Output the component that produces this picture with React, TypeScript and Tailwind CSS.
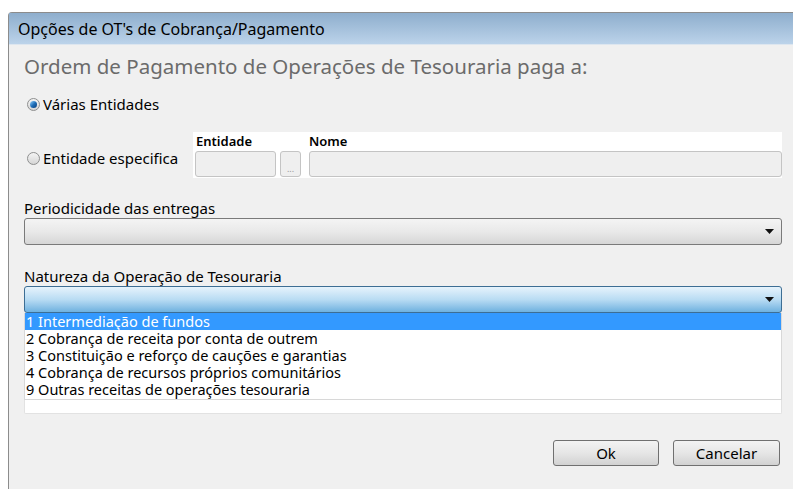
import React from "react";

const font = { fontFamily: '"Noto Sans", "Open Sans", "DejaVu Sans", sans-serif' };

function Arrow() {
  return (
    <svg width="9" height="5" viewBox="0 0 9 5" className="shrink-0">
      <path d="M0 0 H9 L4.5 5 Z" fill="#111" />
    </svg>
  );
}

function Radio({ checked }: { checked?: boolean }) {
  return (
    <span className="relative flex h-[13px] w-[13px] shrink-0 items-center justify-center rounded-full border border-[#8e8f8f] bg-gradient-to-b from-[#f4f4f4] to-[#d6d6d6]">
      {checked && (
        <span className="h-[7px] w-[7px] rounded-full bg-gradient-to-br from-[#8fd3ff] via-[#1f6fb8] to-[#0a3c7a]" />
      )}
    </span>
  );
}

const options = [
  "1 Intermediação de fundos",
  "2 Cobrança de receita por conta de outrem",
  "3 Constituição e reforço de cauções e garantias",
  "4 Cobrança de recursos próprios comunitários",
  "9 Outras receitas de operações tesouraria",
];

export default function App() {
  return (
    <div className="h-[489px] w-[793px] overflow-hidden bg-white pl-[8px] pt-[12px]" style={font}>
      <div className="flex h-full flex-col rounded-tl-[4px] border-l border-t border-[#8c8c8c] bg-[#f0f0f0]">
        {/* title bar */}
        <div className="flex h-[31px] shrink-0 items-center bg-gradient-to-b from-[#8eaecd] to-[#bcd3ea] pl-[9px] text-[16px] text-black">
          Opções de OT's de Cobrança/Pagamento
        </div>
        <div className="h-[1px] bg-[#dde6ef]" />
        <div className="flex flex-1 flex-col pl-[15px] pr-[11px]">
          <div className="mt-[8px] text-[20.5px] leading-[26px] text-[#6b6b6b]">
            Ordem de Pagamento de Operações de Tesouraria paga a:
          </div>

          <div className="mt-[16px] flex items-center gap-[3px] pl-[3px] text-[15px] leading-[18px] text-black">
            <Radio checked />
            <span>Várias Entidades</span>
          </div>

          {/* specific entity */}
          <div className="mt-[19px] flex items-stretch">
            <div className="flex w-[169px] items-center gap-[3px] pl-[3px] pt-[7px] text-[15px] text-black">
              <Radio />
              <span>Entidade especifica</span>
            </div>
            <div className="flex flex-1 flex-col bg-white pl-[2px]">
              <div className="flex h-[19px] items-center text-[13px] font-semibold text-black">
                <span className="w-[114px] pl-[1px]">Entidade</span>
                <span>Nome</span>
              </div>
              <div className="flex h-[27px] items-start gap-[4px]">
                <div className="h-[26px] w-[81px] rounded-[3px] border border-[#c4c4c4] bg-[#efefef]" />
                <div className="flex h-[26px] w-[21px] items-end justify-center rounded-[3px] border border-[#c4c4c4] bg-[#efefef] pb-[2px] text-[9px] leading-[10px] text-[#9a9a9a]">
                  ...
                </div>
                <div className="ml-[4px] h-[26px] flex-1 rounded-[3px] border border-[#c4c4c4] bg-[#efefef]" />
              </div>
            </div>
          </div>

          <div className="mt-[21px] text-[15px] leading-[18px] text-black">Periodicidade das entregas</div>
          <div className="mt-[1px] flex h-[27px] items-center justify-end rounded-[3px] border border-[#7a7a7a] bg-gradient-to-b from-[#f4f4f4] via-[#e9e9e9] to-[#d6d6d6] pr-[7px]">
            <Arrow />
          </div>

          <div className="mt-[22px] text-[15px] leading-[18px] text-black">Natureza da Operação de Tesouraria</div>
          <div className="mt-[1px] flex h-[27px] items-center justify-end rounded-[3px] border border-[#3d6e94] bg-gradient-to-b from-[#e6f3fc] via-[#b9dcf3] to-[#6eb1df] pr-[7px]">
            <Arrow />
          </div>

          {/* dropdown list */}
          <div className="flex flex-col">
            <div className="border border-t-0 border-[#d8d8d8] bg-white pb-[1px]">
              {options.map((o, i) => (
                <div
                  key={o}
                  className={`h-[17px] pl-[1px] text-[14.5px] leading-[17px] ${
                    i === 0 ? "bg-[#3399ff] text-white" : "text-black"
                  }`}
                >
                  {o}
                </div>
              ))}
            </div>
            <div className="h-[14px] rounded-b-[2px] border border-t-0 border-[#e2e2e2] bg-white" />
          </div>

          <div className="mr-[2px] mt-[26px] flex justify-end gap-[14px]">
            <button className="h-[26px] w-[106px] rounded-[3px] border border-[#707070] bg-gradient-to-b from-[#f3f3f3] via-[#e6e6e6] to-[#d2d2d2] text-[15px] text-black">
              Ok
            </button>
            <button className="h-[26px] w-[107px] rounded-[3px] border border-[#707070] bg-gradient-to-b from-[#f3f3f3] via-[#e6e6e6] to-[#d2d2d2] text-[15px] text-black">
              Cancelar
            </button>
          </div>
        </div>
      </div>
    </div>
  );
}
